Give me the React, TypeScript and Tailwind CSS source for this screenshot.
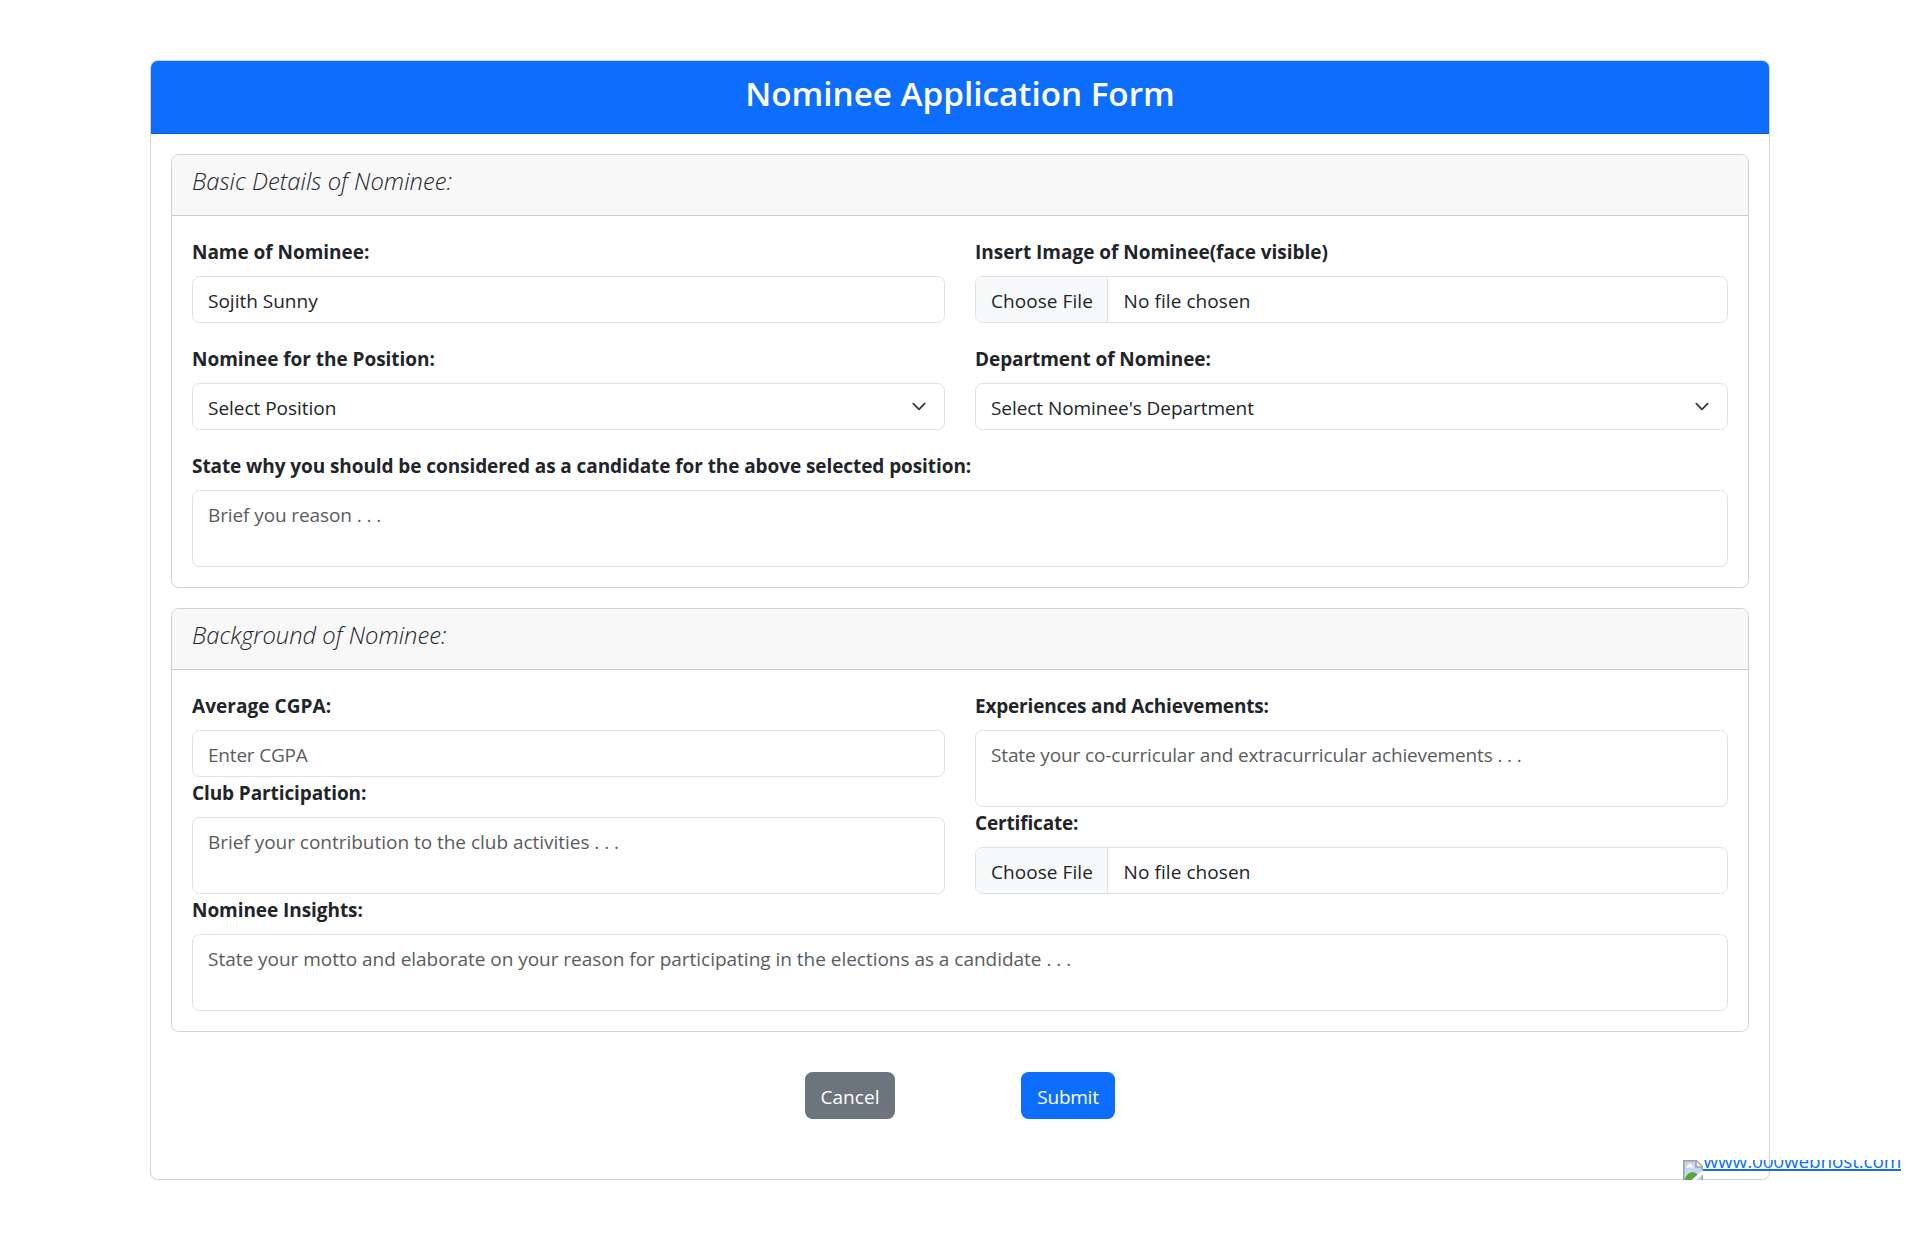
import type { ReactNode } from 'react';

function Label({ children, className }: { children: ReactNode; className: string }) {
  return <div className={`mb-[10px] h-[30px] whitespace-nowrap leading-[32px] font-bold ${className}`}>{children}</div>;
}

const field = 'block w-full rounded-[7.5px] border border-[#dee2e6] bg-white';

function TextField({ value, placeholder, className }: { value?: string; placeholder?: string; className: string }) {
  return (
    <input
      type="text"
      defaultValue={value}
      placeholder={placeholder}
      className={`${field} h-[47px] px-[15px] pt-[9px] pb-[6px] leading-[30px] outline-none placeholder:text-[#595c5f] ${className}`}
    />
  );
}

function TextArea({ placeholder, className }: { placeholder: string; className: string }) {
  return (
    <textarea
      placeholder={placeholder}
      className={`${field} h-[77px] resize-none overflow-hidden px-[15px] pt-[9px] leading-[30px] outline-none placeholder:text-[#595c5f] ${className}`}
    />
  );
}

function FileField() {
  return (
    <div className={`${field} flex h-[47px] overflow-hidden leading-[48px]`}>
      <div className="w-[132px] shrink-0 border-r border-[#dee2e6] bg-[#f8f9fa] pl-[15px] tracking-[0.06px]">Choose File</div>
      <div className="pl-[15.5px] tracking-[0.08px]">No file chosen</div>
    </div>
  );
}

function SelectField({ text, className }: { text: string; className: string }) {
  return (
    <div className={`${field} flex h-[47px] items-center justify-between px-[15px] leading-[45px]`}>
      <span className={`pt-[3px] ${className}`}>{text}</span>
      <svg width="20" height="15" viewBox="0 0 16 16" fill="none" stroke="#343a40" strokeWidth="2" strokeLinecap="round" strokeLinejoin="round">
        <path d="m2 5 6 6 6-6" />
      </svg>
    </div>
  );
}

function Section({ title, className, children }: { title: string; className: string; children: ReactNode }) {
  return (
    <section className="rounded-[7.5px] border border-[#d0d1d2] bg-white">
      <div className="h-[61px] rounded-t-[6.5px] border-b border-[#c9cacb] bg-[#f8f8f8] px-5 pt-[10px]">
        <h2 className={`text-[23.75px] leading-[32px] font-light italic ${className}`}>{title}</h2>
      </div>
      <div className="p-5">{children}</div>
    </section>
  );
}

function BrokenImage() {
  return (
    <svg width="20" height="20" viewBox="0 0 20 20" className="shrink-0">
      <path d="M.75 21V.75H13.5L19.25 6.5V21" fill="#c5d6f5" stroke="#a0a0a0" strokeWidth="1.5" />
      <path d="M3.2 7.5c0-1.300.8-1.900 1.700-1.900.4-1.300 1.300-2 2.300-2 1.200 0 1.900.8 2.100 2 .8.1 1.200.8 1.200 1.900z" fill="#fff" />
      <path d="M1.500 20C3 14.500 6.500 12 10 12.200c2.400.2 3.800 1.400 4.500 2.800L9 20z" fill="#55a63c" />
      <path d="M13 1v6h6" fill="#f2f2f2" stroke="#a0a0a0" strokeWidth="1.500" />
      <path d="M20 10 8.500 20h4.300L20 14.500z" fill="#fff" />
    </svg>
  );
}

export default function App() {
  return (
    <div className="relative h-[1240px] w-full overflow-hidden bg-white pt-[60px] font-['Open_Sans','Noto_Sans',sans-serif] text-[19px] text-[#212529]">
      <main className="mx-auto h-[1120px] w-[1620px] rounded-[7.5px] border border-[#d0d1d2]">
        <header className="h-[73px] rounded-t-[6.5px] border-b border-[#0b5ed0] bg-[#0d6efd] pt-[10px] text-center">
          <h1 className="text-[33.25px] leading-[44px] font-semibold tracking-[-0.01px] text-white">Nominee Application Form</h1>
        </header>
        <form className="flex flex-col gap-5 p-5">
          <Section title="Basic Details of Nominee:" className="tracking-[0.029px]">
            <div className="grid grid-cols-2 gap-x-[30px] gap-y-5">
              <div>
                <Label className="tracking-[-0.03px]">Name of Nominee:</Label>
                <TextField value="Sojith Sunny" className="tracking-[0px]" />
              </div>
              <div>
                <Label className="tracking-[-0.023px]">Insert Image of Nominee(face visible)</Label>
                <FileField />
              </div>
              <div>
                <Label className="tracking-[-0.036px]">Nominee for the Position:</Label>
                <SelectField text="Select Position" className="tracking-[-0.03px]" />
              </div>
              <div>
                <Label className="tracking-[-0.066px]">Department of Nominee:</Label>
                <SelectField text="Select Nominee's Department" className="tracking-[-0.06px]" />
              </div>
              <div className="col-span-2">
                <Label className="tracking-[-0.08px]">State why you should be considered as a candidate for the above selected position:</Label>
                <TextArea placeholder="Brief you reason . . ." className="tracking-[-0.1px]" />
              </div>
            </div>
          </Section>
          <Section title="Background of Nominee:" className="tracking-[0.015px]">
            <div className="grid grid-cols-2 gap-x-[30px]">
              <div>
                <Label className="tracking-[0.05px]">Average CGPA:</Label>
                <TextField placeholder="Enter CGPA" className="tracking-[-0.2px]" />
                <Label className="tracking-[-0.1px]">Club Participation:</Label>
                <TextArea placeholder="Brief your contribution to the club activities . . ." className="tracking-[-0.025px]" />
              </div>
              <div>
                <Label className="tracking-[-0.189px]">Experiences and Achievements:</Label>
                <TextArea placeholder="State your co-curricular and extracurricular achievements . . ." className="tracking-[-0.13px]" />
                <Label className="tracking-[-0.16px]">Certificate:</Label>
                <FileField />
              </div>
              <div className="col-span-2">
                <Label className="tracking-[-0.061px]">Nominee Insights:</Label>
                <TextArea placeholder="State your motto and elaborate on your reason for participating in the elections as a candidate . . ." className="tracking-[-0.022px]" />
              </div>
            </div>
          </Section>
          <div className="mt-5 flex justify-center gap-[126px] text-white">
            <button type="button" className="h-[47px] w-[90px] rounded-[7.5px] bg-[#6c757d] pt-[3px] tracking-[0.05px]">Cancel</button>
            <button type="button" className="h-[47px] w-[94px] rounded-[7.5px] bg-[#0d6efd] pt-[3px] tracking-[-0.25px]">Submit</button>
          </div>
        </form>
      </main>
      <a className="absolute top-[1160px] left-[1683px] flex h-[20px] overflow-hidden text-[#0d6efd]">
        <BrokenImage />
        <span className="-mt-[13px] h-[24px] border-b-2 border-[#0d6efd] pl-[0.5px] leading-[28px] tracking-[-0.17px]">www.000webhost.com</span>
      </a>
    </div>
  );
}
